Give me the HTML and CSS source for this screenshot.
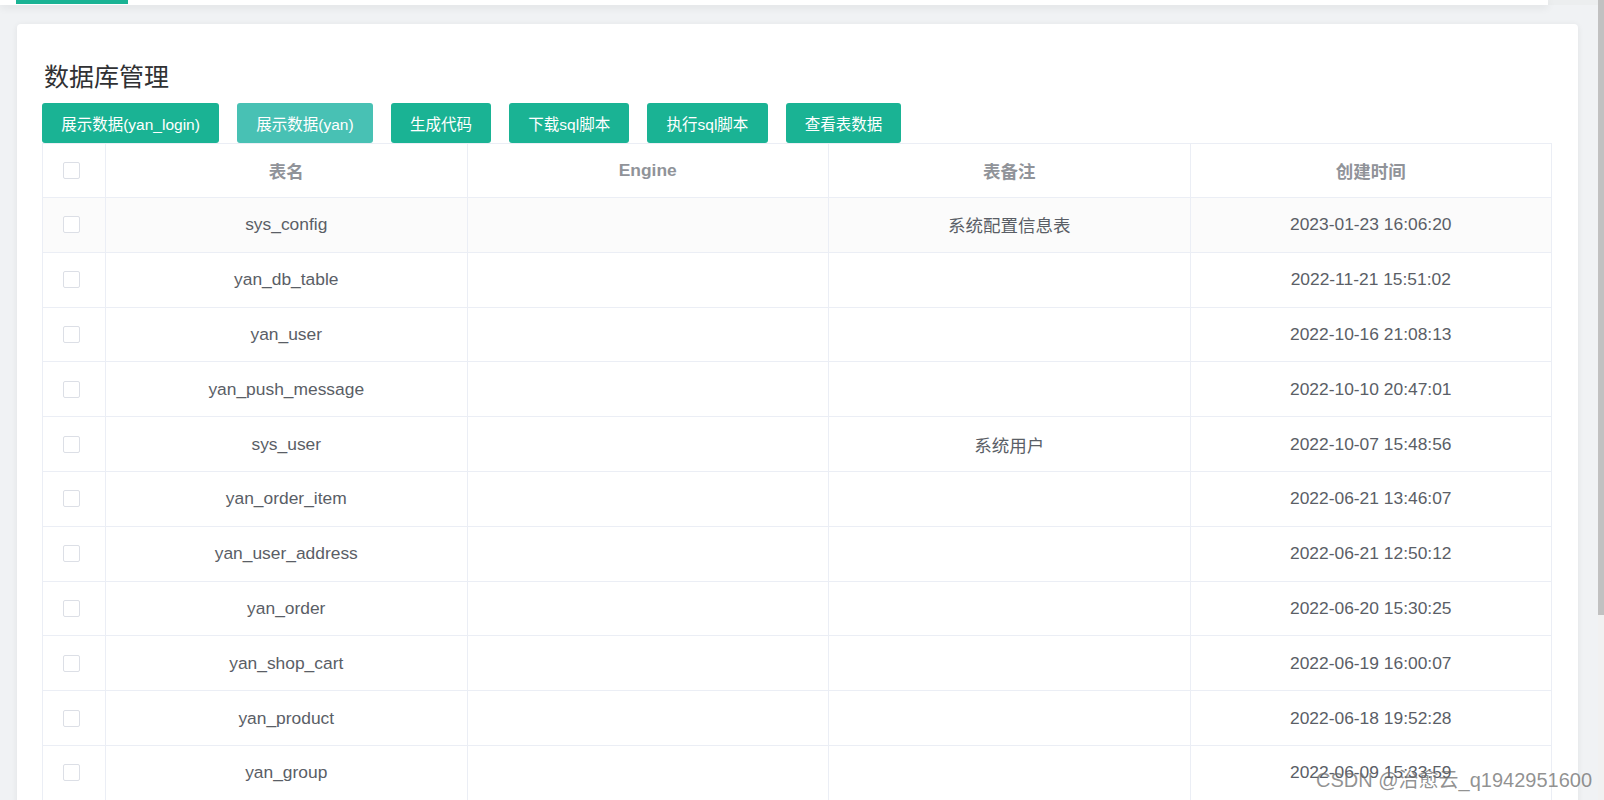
FILE: index.html
```html
<!DOCTYPE html>
<html lang="zh-CN">
<head>
<meta charset="utf-8">
<title>数据库管理</title>
<link rel="stylesheet" href="styles.css">
</head>
<body>
<div class="page">
  <div class="main">
    <div class="topbar">
      <div class="tabs"><span class="tab-active"></span></div>
      <div class="topbar-end"></div>
    </div>
    <div class="card">
      <h1 class="title">数据库管理</h1>
      <div class="toolbar">
        <button class="btn">展示数据(yan_login)</button>
        <button class="btn btn-light">展示数据(yan)</button>
        <button class="btn">生成代码</button>
        <button class="btn">下载sql脚本</button>
        <button class="btn">执行sql脚本</button>
        <button class="btn">查看表数据</button>
      </div>
      <table class="grid">
        <colgroup>
          <col class="c-check"><col><col><col><col>
        </colgroup>
        <thead>
          <tr>
            <th class="check-cell"><span class="checkbox"></span></th>
            <th><span class="cn">表名</span></th>
            <th>Engine</th>
            <th><span class="cn">表备注</span></th>
            <th><span class="cn">创建时间</span></th>
          </tr>
        </thead>
        <tbody>
          <tr class="hover">
            <td class="check-cell"><span class="checkbox"></span></td>
            <td>sys_config</td><td></td><td><span class="cn">系统配置信息表</span></td><td>2023-01-23 16:06:20</td>
          </tr>
          <tr>
            <td class="check-cell"><span class="checkbox"></span></td>
            <td>yan_db_table</td><td></td><td></td><td>2022-11-21 15:51:02</td>
          </tr>
          <tr>
            <td class="check-cell"><span class="checkbox"></span></td>
            <td>yan_user</td><td></td><td></td><td>2022-10-16 21:08:13</td>
          </tr>
          <tr>
            <td class="check-cell"><span class="checkbox"></span></td>
            <td>yan_push_message</td><td></td><td></td><td>2022-10-10 20:47:01</td>
          </tr>
          <tr>
            <td class="check-cell"><span class="checkbox"></span></td>
            <td>sys_user</td><td></td><td><span class="cn">系统用户</span></td><td>2022-10-07 15:48:56</td>
          </tr>
          <tr>
            <td class="check-cell"><span class="checkbox"></span></td>
            <td>yan_order_item</td><td></td><td></td><td>2022-06-21 13:46:07</td>
          </tr>
          <tr>
            <td class="check-cell"><span class="checkbox"></span></td>
            <td>yan_user_address</td><td></td><td></td><td>2022-06-21 12:50:12</td>
          </tr>
          <tr>
            <td class="check-cell"><span class="checkbox"></span></td>
            <td>yan_order</td><td></td><td></td><td>2022-06-20 15:30:25</td>
          </tr>
          <tr>
            <td class="check-cell"><span class="checkbox"></span></td>
            <td>yan_shop_cart</td><td></td><td></td><td>2022-06-19 16:00:07</td>
          </tr>
          <tr>
            <td class="check-cell"><span class="checkbox"></span></td>
            <td>yan_product</td><td></td><td></td><td>2022-06-18 19:52:28</td>
          </tr>
          <tr>
            <td class="check-cell"><span class="checkbox"></span></td>
            <td>yan_group</td><td></td><td></td><td>2022-06-09 15:33:59</td>
          </tr>
          <tr>
            <td class="check-cell"><span class="checkbox"></span></td>
            <td>yan_role</td><td></td><td></td><td>2022-06-08 10:21:44</td>
          </tr>
        </tbody>
      </table>
    </div>
  </div>
  <div class="scrollbar"><div class="thumb"></div></div>
</div>
<div class="watermark">CSDN @治愈云_q1942951600</div>
</body>
</html>
```
FILE: styles.css
```css
html, body {
  margin: 0;
  padding: 0;
  height: 100%;
  overflow: hidden;
}
body {
  background: #f0f2f4;
  font-family: "Liberation Sans", Arial, "Noto Sans CJK SC", sans-serif;
  color: #5a5e66;
}
.page {
  display: flex;
  height: 100vh;
}
.main {
  flex: 1;
  display: flex;
  flex-direction: column;
  min-width: 0;
}
.topbar {
  display: flex;
  height: 5px;
  flex-shrink: 0;
}
.tabs {
  flex: 1;
  background: #fff;
  box-shadow: 0 2px 8px rgba(0, 0, 0, 0.09);
  position: relative;
  z-index: 1;
}
.tab-active {
  display: block;
  margin-left: 16px;
  width: 112px;
  height: 4px;
  background: #1ab394;
}
.topbar-end {
  width: 50px;
  background: #eceeef;
}
.card {
  margin: 19px 20px 0 17px;
  background: #fff;
  border-radius: 4px;
  box-shadow: 0 1px 6px rgba(0, 0, 0, 0.07);
  padding: 33px 26px 20px 25px;
  flex: 1;
}
.title {
  margin: 0 0 10px 2px;
  font-size: 25px;
  line-height: 36px;
  font-weight: normal;
  color: #303133;
  font-family: "Noto Sans CJK SC", sans-serif;
}
.toolbar {
  display: flex;
  gap: 18px;
}
.btn {
  height: 40px;
  padding: 0 19.2px;
  border: none;
  border-radius: 3px;
  background: #1ab394;
  color: #fff;
  font-family: "Liberation Sans", Arial, "Noto Sans CJK SC", sans-serif;
  font-size: 15.5px;
  cursor: pointer;
}
.btn-light {
  background: #48c1b4;
}
.grid {
  width: 100%;
  border-collapse: collapse;
  table-layout: fixed;
  border: 1px solid #ebeef5;
}
.c-check {
  width: 63px;
}
.grid th,
.grid td {
  border: 1px solid #ebeef5;
  text-align: center;
  padding: 0;
  height: 53px;
  font-size: 17.4px;
  white-space: nowrap;
}
.grid td {
  height: 53.8px;
}
.grid th {
  color: #909399;
  font-weight: bold;
  font-size: 17.4px;
}
.grid .check-cell {
  text-align: left;
  padding-left: 20px;
}
.cn {
  font-family: "Noto Sans CJK SC", sans-serif;
  font-size: 17.5px;
}
.grid tr.hover td {
  background: #fbfbfb;
}
.checkbox {
  display: block;
  width: 17px;
  height: 17px;
  box-sizing: border-box;
  border: 1px solid #dcdfe6;
  border-radius: 2px;
  background: #fff;
}
.scrollbar {
  width: 6px;
  background: #f1f1f1;
  flex-shrink: 0;
}
.thumb {
  height: 615px;
  background: #c1c1c1;
}
.watermark {
  position: absolute;
  left: 1316px;
  top: 764px;
  font-size: 20px;
  color: rgba(110, 110, 110, 0.75);
  font-family: "Liberation Sans", Arial, "Noto Sans CJK SC", sans-serif;
  white-space: nowrap;
}
```
